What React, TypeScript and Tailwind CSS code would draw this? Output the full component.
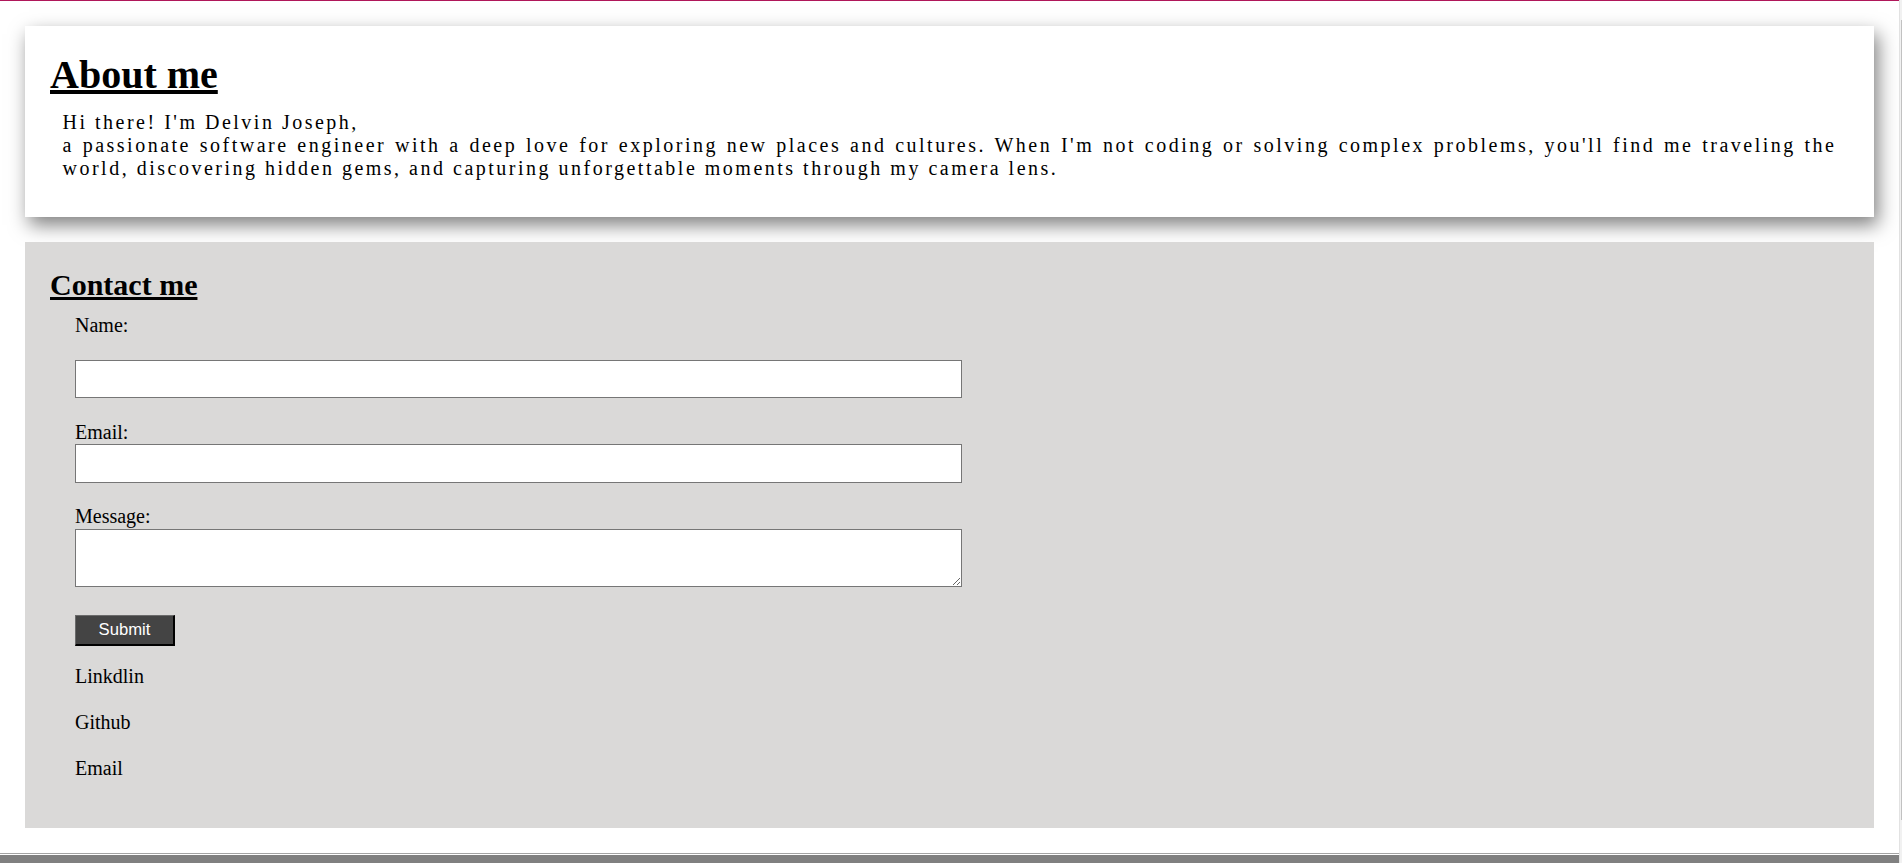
import React from "react";

const serif = { fontFamily: '"Liberation Serif", "Times New Roman", serif' };

function AboutCard() {
  return (
    <section className="bg-white px-[25px] pt-[26px] pb-[37px] shadow-[4px_8px_18px_rgba(0,0,0,0.5)]">
      <h1 className="text-[40px] font-bold leading-[46px] underline">About me</h1>
      <p className="mx-[12.5px] mt-[13px] text-justify text-[20px] leading-[23px] tracking-[2.5px] text-black">
        Hi there! I'm Delvin Joseph,
        <br />
        a passionate software engineer with a deep love for exploring new places and cultures. When I'm not coding or
        solving complex problems, you'll find me traveling the world, discovering hidden gems, and capturing
        unforgettable moments through my camera lens.
      </p>
    </section>
  );
}

function ContactSection() {
  return (
    <section className="mt-[25px] bg-[#dad9d8] px-[25px] pt-[26px] pb-[48px]">
      <h2 className="text-[30px] font-bold leading-[34px] underline">Contact me</h2>
      <form className="ml-[25px] text-[20px] leading-[23px]" onSubmit={(e) => e.preventDefault()}>
        <label htmlFor="name" className="mt-[12px] block">
          Name:
        </label>
        <input
          id="name"
          type="text"
          className="mt-[23px] block h-[38px] w-[887px] border border-[#767676] bg-white"
        />
        <label htmlFor="email" className="mt-[23px] block">
          Email:
        </label>
        <input id="email" type="email" className="block h-[39px] w-[887px] border border-[#767676] bg-white" />
        <label htmlFor="message" className="mt-[22px] block">
          Message:
        </label>
        <textarea
          id="message"
          className="mt-[1px] block h-[58px] w-[887px] border border-[#767676] bg-white"
        />
        <button
          type="submit"
          className="mt-[28px] block h-[31px] w-[100px] border-t border-l border-r-2 border-b-2 border-t-[#6b6b6b] border-l-[#6b6b6b] border-r-black border-b-black bg-[#444444] text-[16.67px] leading-none text-white"
          style={{ fontFamily: '"Liberation Sans", Arial, sans-serif' }}
        >
          Submit
        </button>
        <div className="mt-[19px]">
          <a href="#" className="block">Linkdlin</a>
          <a href="#" className="mt-[23px] block">Github</a>
          <a href="#" className="mt-[23px] block">Email</a>
        </div>
      </form>
    </section>
  );
}

export default function App() {
  return (
    <div className="flex min-h-screen bg-white text-black" style={serif}>
      <div className="flex-1 border-t border-[#b0175a]">
        <main className="px-[25px] pt-[25px]">
          <AboutCard />
          <ContactSection />
        </main>
        {/* footer strip at the bottom */}
        <div className="mt-[25px] h-px bg-[#a4a4a4]" />
        <div className="h-px bg-white" />
        <footer className="h-[40px] bg-[#808080]" />
      </div>
      <div className="flex w-[3px] justify-center border-l border-[#e2e2e2] bg-[#f1f1f1]">
        <div className="mt-[20px] h-[800px] w-px bg-[#c1c1c1]" />
      </div>
    </div>
  );
}
